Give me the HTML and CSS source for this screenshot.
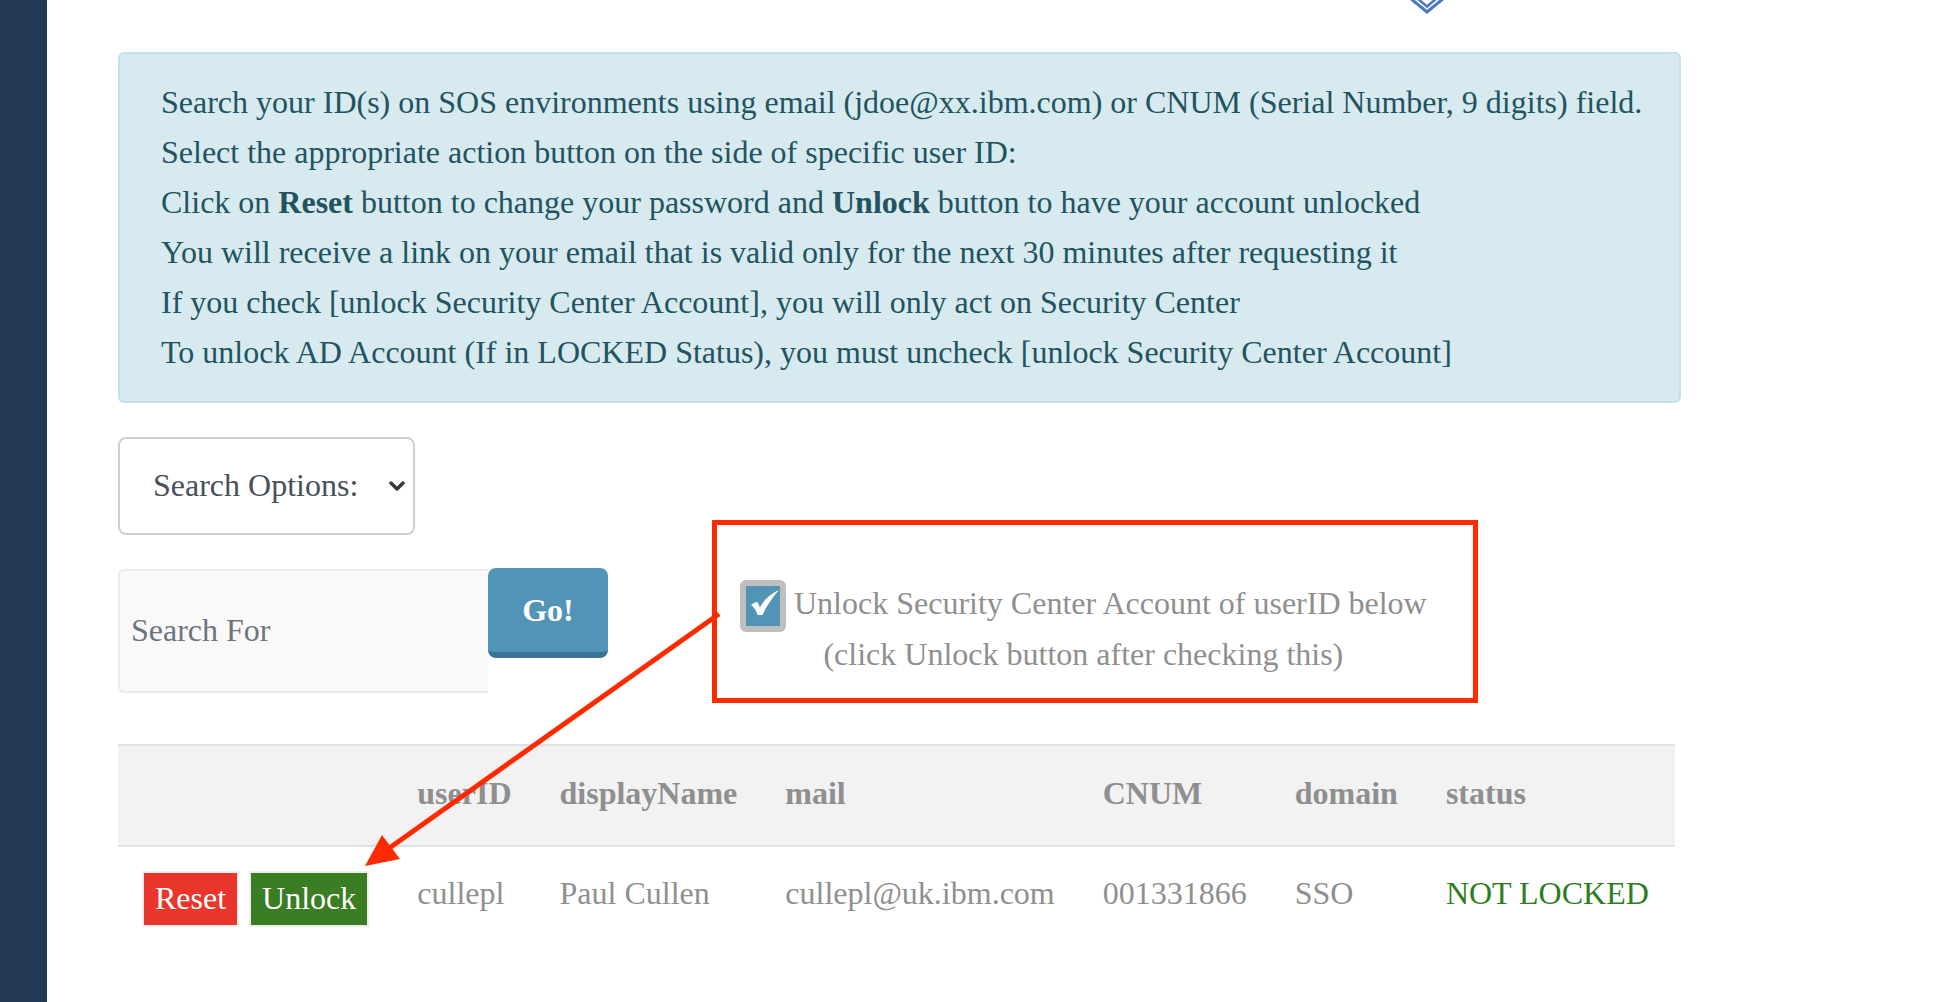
FILE: index.html
```html
<!DOCTYPE html>
<html lang="en">
<head>
<meta charset="utf-8">
<title>SOS ID Search</title>
<link rel="stylesheet" href="styles.css">
</head>
<body>
<div class="layout">
  <aside class="sidebar"></aside>
  <main class="main">
    <div class="topbar">
      <svg class="logo" width="36" height="14" viewBox="0 0 36 14">
        <polyline points="1,-2 18,12 35,-2" fill="none" stroke="#4a78bf" stroke-width="3"/>
        <polyline points="8,-2 18,6.5 28,-2" fill="none" stroke="#4a78bf" stroke-width="2.5"/>
      </svg>
    </div>

    <div class="alert">
      <p class="alert-line">Search your ID(s) on SOS environments using email (jdoe@xx.ibm.com) or CNUM (Serial Number, 9 digits) field.</p>
      <p class="alert-line">Select the appropriate action button on the side of specific user ID:</p>
      <p class="alert-line">Click on <b>Reset</b> button to change your password and <b>Unlock</b> button to have your account unlocked</p>
      <p class="alert-line">You will receive a link on your email that is valid only for the next 30 minutes after requesting it</p>
      <p class="alert-line">If you check [unlock Security Center Account], you will only act on Security Center</p>
      <p class="alert-line">To unlock AD Account (If in LOCKED Status), you must uncheck [unlock Security Center Account]</p>
    </div>

    <div class="select">
      <span class="select-text">Search Options:</span>
      <svg class="chevron" width="16" height="10" viewBox="0 0 16 10">
        <polyline points="2,2 8,8 14,2" fill="none" stroke="#343a40" stroke-width="3.5" stroke-linecap="round" stroke-linejoin="round"/>
      </svg>
    </div>

    <div class="search-row">
      <div class="search-input">Search For</div>
      <button class="go">Go!</button>
      <div class="unlock-opt">
        <span class="checkbox"><svg class="check" width="34" height="40" viewBox="0 0 34 40"><path d="M5 19 C7.5 17 9.5 16 11.5 16 L14 21.5 C18 13.5 25 7.5 33 4 C27.5 10.5 20.5 19.5 16.5 29 L11.5 29 C10.5 25 8.5 21.5 5 19 Z" fill="#ffffff"/></svg></span> Unlock Security Center Account of userID below<br>(click Unlock button after checking this)
      </div>
    </div>

    <table class="results">
      <thead>
        <tr>
          <th></th>
          <th>userID</th>
          <th>displayName</th>
          <th>mail</th>
          <th>CNUM</th>
          <th>domain</th>
          <th>status</th>
        </tr>
      </thead>
      <tbody>
        <tr>
          <td class="actions"><div class="btns"><span class="btn btn-reset">Reset</span><span class="btn btn-unlock">Unlock</span></div></td>
          <td>cullepl</td>
          <td>Paul Cullen</td>
          <td>cullepl@uk.ibm.com</td>
          <td>001331866</td>
          <td>SSO</td>
          <td class="status-ok">NOT LOCKED</td>
        </tr>
      </tbody>
    </table>
  </main>
</div>

<svg class="annotation" width="1950" height="1002" viewBox="0 0 1950 1002">
  <rect x="714.5" y="522.5" width="761" height="178" fill="none" stroke="#ff2a00" stroke-width="5"/>
  <line x1="719" y1="614" x2="388" y2="849" stroke="#ff2a00" stroke-width="5"/>
  <polygon points="365,866 400,859 382,835" fill="#ff2a00"/>
</svg>
</body>
</html>
```

FILE: styles.css
```css
html, body {
  margin: 0;
  padding: 0;
  height: 100%;
  overflow: hidden;
  background: #ffffff;
}

body {
  font-family: "Liberation Serif", "Times New Roman", serif;
  font-size: 32px;
  position: relative;
}

.layout {
  display: flex;
  height: 1002px;
}

.sidebar {
  width: 47px;
  flex: 0 0 47px;
  background: #233a54;
}

.main {
  padding-left: 71px;
  width: 1563px;
}

.topbar {
  height: 52px;
  display: flex;
  align-items: flex-start;
}

.logo {
  display: block;
  margin-left: 1291px;
}

.alert {
  background: #d6eaf0;
  border: 2px solid #c2e2ea;
  border-radius: 6px;
  padding: 23px 30px 24px 41px;
  color: #22535f;
}

.alert-line {
  margin: 0;
  line-height: 50px;
  white-space: nowrap;
}

.alert-line b {
  font-weight: bold;
}

.select {
  margin-top: 34px;
  width: 297px;
  height: 98px;
  box-sizing: border-box;
  border: 2px solid #ccd1d7;
  border-radius: 8px;
  display: flex;
  align-items: center;
  padding-left: 33px;
  padding-right: 8px;
  color: #495057;
}

.select-text {
  flex: 1;
  position: relative;
  top: -1px;
}

.chevron {
  display: block;
}

.search-row {
  margin-top: 33px;
  display: flex;
  align-items: flex-start;
}

.search-input {
  margin-top: 1px;
  width: 370px;
  height: 124px;
  box-sizing: border-box;
  background: #f9f9f9;
  border: 2px solid #ececec;
  border-right: none;
  border-radius: 6px 0 0 6px;
  padding-left: 11px;
  padding-bottom: 2px;
  display: flex;
  align-items: center;
  color: #6c757d;
}

.go {
  width: 120px;
  height: 90px;
  box-sizing: border-box;
  background: #5294b6;
  border: none;
  border-bottom: 6px solid #3a7597;
  border-radius: 8px;
  color: #ffffff;
  font-family: "Liberation Serif", "Times New Roman", serif;
  font-size: 32px;
  font-weight: bold;
  padding: 0;
}

.unlock-opt {
  margin-left: 132px;
  margin-top: 10px;
  text-align: center;
  line-height: 51px;
  color: #8f8f8f;
  white-space: nowrap;
}

.checkbox {
  display: inline-block;
  width: 34px;
  height: 40px;
  background: #5294b6;
  border: 6px solid #bfbfbf;
  border-radius: 6px;
  vertical-align: -13px;
  margin-bottom: -5px;
}

.check {
  display: block;
}

.results {
  margin-top: 51px;
  border-collapse: collapse;
  color: #8f8f8f;
}

.results th {
  background: #f2f2f2;
  border-top: 2px solid #dee2e6;
  border-bottom: 2px solid #dee2e6;
  text-align: left;
  font-weight: bold;
  padding: 25px 24px 30px;
  line-height: 44px;
  white-space: nowrap;
}

.results td {
  padding: 24px;
  line-height: 44px;
  vertical-align: top;
  white-space: nowrap;
}

.results th:last-child,
.results td:last-child {
  padding-right: 26px;
}

.btns {
  display: flex;
  gap: 10px;
}

.btn {
  display: block;
  color: #ffffff;
  line-height: 36px;
  padding: 7px 11px 9px;
  border: 2px solid #ededed;
}

.btn-reset {
  background: #e9352a;
}

.btn-unlock {
  background: #3a7d22;
}

.status-ok {
  color: #2e7d1e;
}

.annotation {
  position: absolute;
  left: 0;
  top: 0;
  pointer-events: none;
}
```
